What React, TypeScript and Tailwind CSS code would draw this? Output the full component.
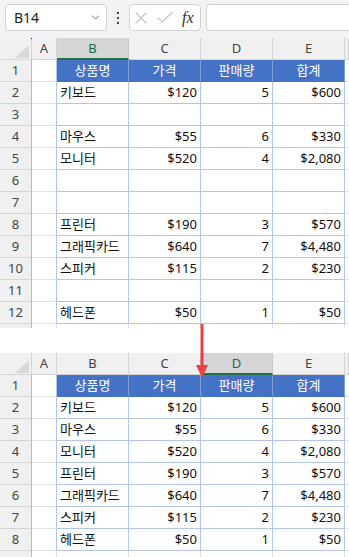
import { ChevronDown } from "lucide-react";

type Row = [string, string, string, string] | null;

const COLS = ["A", "B", "C", "D", "E", ""];

const SHEET1: Row[] = [
    ["키보드", "$120", "5", "$600"],
    null,
    ["마우스", "$55", "6", "$330"],
    ["모니터", "$520", "4", "$2,080"],
    null,
    null,
    ["프린터", "$190", "3", "$570"],
    ["그래픽카드", "$640", "7", "$4,480"],
    ["스피커", "$115", "2", "$230"],
    null,
    ["헤드폰", "$50", "1", "$50"],
];

const SHEET2: Row[] = [
    ["키보드", "$120", "5", "$600"],
    ["마우스", "$55", "6", "$330"],
    ["모니터", "$520", "4", "$2,080"],
    ["프린터", "$190", "3", "$570"],
    ["그래픽카드", "$640", "7", "$4,480"],
    ["스피커", "$115", "2", "$230"],
    ["헤드폰", "$50", "1", "$50"],
];

const HEADERS = ["상품명", "가격", "판매량", "합계"];

function Toolbar() {
    return (
        <div className="flex h-[38px] items-start bg-[#f3f3f3] pl-[5px] pt-[4px]">
            {/* Name box */}
            <div className="flex h-[27px] w-[102px] items-center justify-between rounded-[4px] border border-[#d1d1d1] bg-white pl-[8px] pr-[4px]">
                <span className="text-[14px] text-[#222]">B14</span>
                <ChevronDown className="h-[13px] w-[13px] text-[#555]" strokeWidth={1.5} />
            </div>
            <div className="flex h-[27px] w-[22px] flex-col items-center justify-center gap-[3px]">
                <span className="h-[2px] w-[2px] bg-[#444]" />
                <span className="h-[2px] w-[2px] bg-[#444]" />
                <span className="h-[2px] w-[2px] bg-[#444]" />
            </div>
            {/* Cancel / enter / fx */}
            <div className="flex h-[27px] w-[72px] items-center rounded-[4px] border border-[#d1d1d1] bg-white pl-[5px]">
                <svg viewBox="0 0 12 12" className="h-[12px] w-[12px]" fill="none" stroke="#c4c4c4" strokeWidth={1.1}>
                    <path d="M0.5 0.5L11.5 11.5M11.5 0.5L0.5 11.5" />
                </svg>
                <svg viewBox="0 0 16 11" className="ml-[10px] h-[11px] w-[16px]" fill="none" stroke="#c4c4c4" strokeWidth={1.1}>
                    <path d="M0.5 5.5L5 10L15.5 0.5" />
                </svg>
                <span className="ml-[9px] text-[16px] italic text-[#333]" style={{ fontFamily: '"Liberation Serif", serif' }}>
                    fx
                </span>
            </div>
            {/* Formula bar */}
            <div className="ml-[5px] h-[27px] flex-1 rounded-l-[4px] border border-r-0 border-[#d1d1d1] bg-white" />
        </div>
    );
}

function Sheet({ rows, selected, height }: { rows: Row[]; selected: string; height: number }) {
    // table rows (header + data) plus one partly visible row below
    const total = rows.length + 2;

    return (
        <div className="overflow-hidden" style={{ height }}>
            <div className="grid auto-rows-[22px] grid-cols-[32px_25px_72px_72px_72px_72px_1fr] text-[13px]">
                {/* Column headers */}
                <div className="relative border-b border-r border-[#d4d4d4] bg-[#f0f0f0]">
                    <svg viewBox="0 0 14 13" className="absolute left-[15px] top-[7px] h-[13px] w-[14px]">
                        <polygon points="14,0 14,13 0,13" fill="#d8d8d8" />
                    </svg>
                </div>
                {COLS.map((c, i) => {
                    const sel = c === selected;
                    return (
                        <div
                            key={i}
                            className={
                                sel
                                    ? "flex items-center justify-center border-b-2 border-r border-b-[#217346] border-r-[#c8c8c8] bg-[#d6d6d6] pt-[2px] text-[#1e6b3f]"
                                    : "flex items-center justify-center border-b border-r border-[#d4d4d4] bg-[#f0f0f0] text-[#444]"
                            }
                        >
                            {c}
                        </div>
                    );
                })}

                {/* Rows */}
                {Array.from({ length: total }).map((_, r) => {
                    const n = r + 1;
                    const inTable = n <= rows.length + 1;
                    const isHead = n === 1;
                    const data = !isHead && inTable ? rows[n - 2] : null;
                    return [
                        <div
                            key={`n${n}`}
                            className="flex items-center justify-center border-b border-r border-b-[#d4d4d4] border-r-[#b9b9b9] bg-[#f0f0f0] text-[#444]"
                        >
                            {inTable ? n : ""}
                        </div>,
                        <div
                            key={`a${n}`}
                            className={
                                inTable
                                    ? "border-b border-r border-b-[#e1e1e1] border-r-[#b4c6e7] bg-white"
                                    : "border-b border-r border-[#e1e1e1] bg-white"
                            }
                        />,
                        ...[0, 1, 2, 3].map((c) => {
                            if (isHead) {
                                return (
                                    <div
                                        key={`h${c}`}
                                        className="flex items-center justify-center border-b border-r border-b-[#4472c4] border-r-[#7f9ed8] bg-[#4472c4] text-white"
                                    >
                                        {HEADERS[c]}
                                    </div>
                                );
                            }
                            if (!inTable) {
                                return <div key={`e${c}`} className="border-b border-r border-[#e1e1e1] bg-white" />;
                            }
                            return (
                                <div
                                    key={`d${c}`}
                                    className={
                                        c === 0
                                            ? "flex items-center border-b border-r border-[#b4c6e7] bg-white px-[3px] text-[#111]"
                                            : "flex items-center justify-end border-b border-r border-[#b4c6e7] bg-white px-[3px] text-[#111]"
                                    }
                                >
                                    {data ? data[c] : ""}
                                </div>
                            );
                        }),
                        <div key={`f${n}`} className="border-b border-[#e1e1e1] bg-white" />,
                    ];
                })}
            </div>
        </div>
    );
}

export default function App() {
    return (
        <div
            className="relative h-[557px] w-[349px] overflow-hidden bg-white"
            style={{ fontFamily: '"Noto Sans", "Noto Sans CJK KR", sans-serif' }}
        >
            <Toolbar />
            <Sheet rows={SHEET1} selected="B" height={290} />
            <div className="h-[25px]" />
            <Sheet rows={SHEET2} selected="D" height={204} />

            {/* small cursor dot by the corner cell */}
            <span className="absolute left-[31px] top-[38px] h-px w-px bg-[#222]" />

            {/* Arrow */}
            <svg viewBox="0 0 12 54" className="absolute left-[196px] top-[324px] h-[54px] w-[12px]">
                <line x1="6" y1="0" x2="6" y2="42" stroke="#ea4440" strokeWidth={3} />
                <polygon points="0,41 12,41 6,54" fill="#ea4440" />
            </svg>
        </div>
    );
}
